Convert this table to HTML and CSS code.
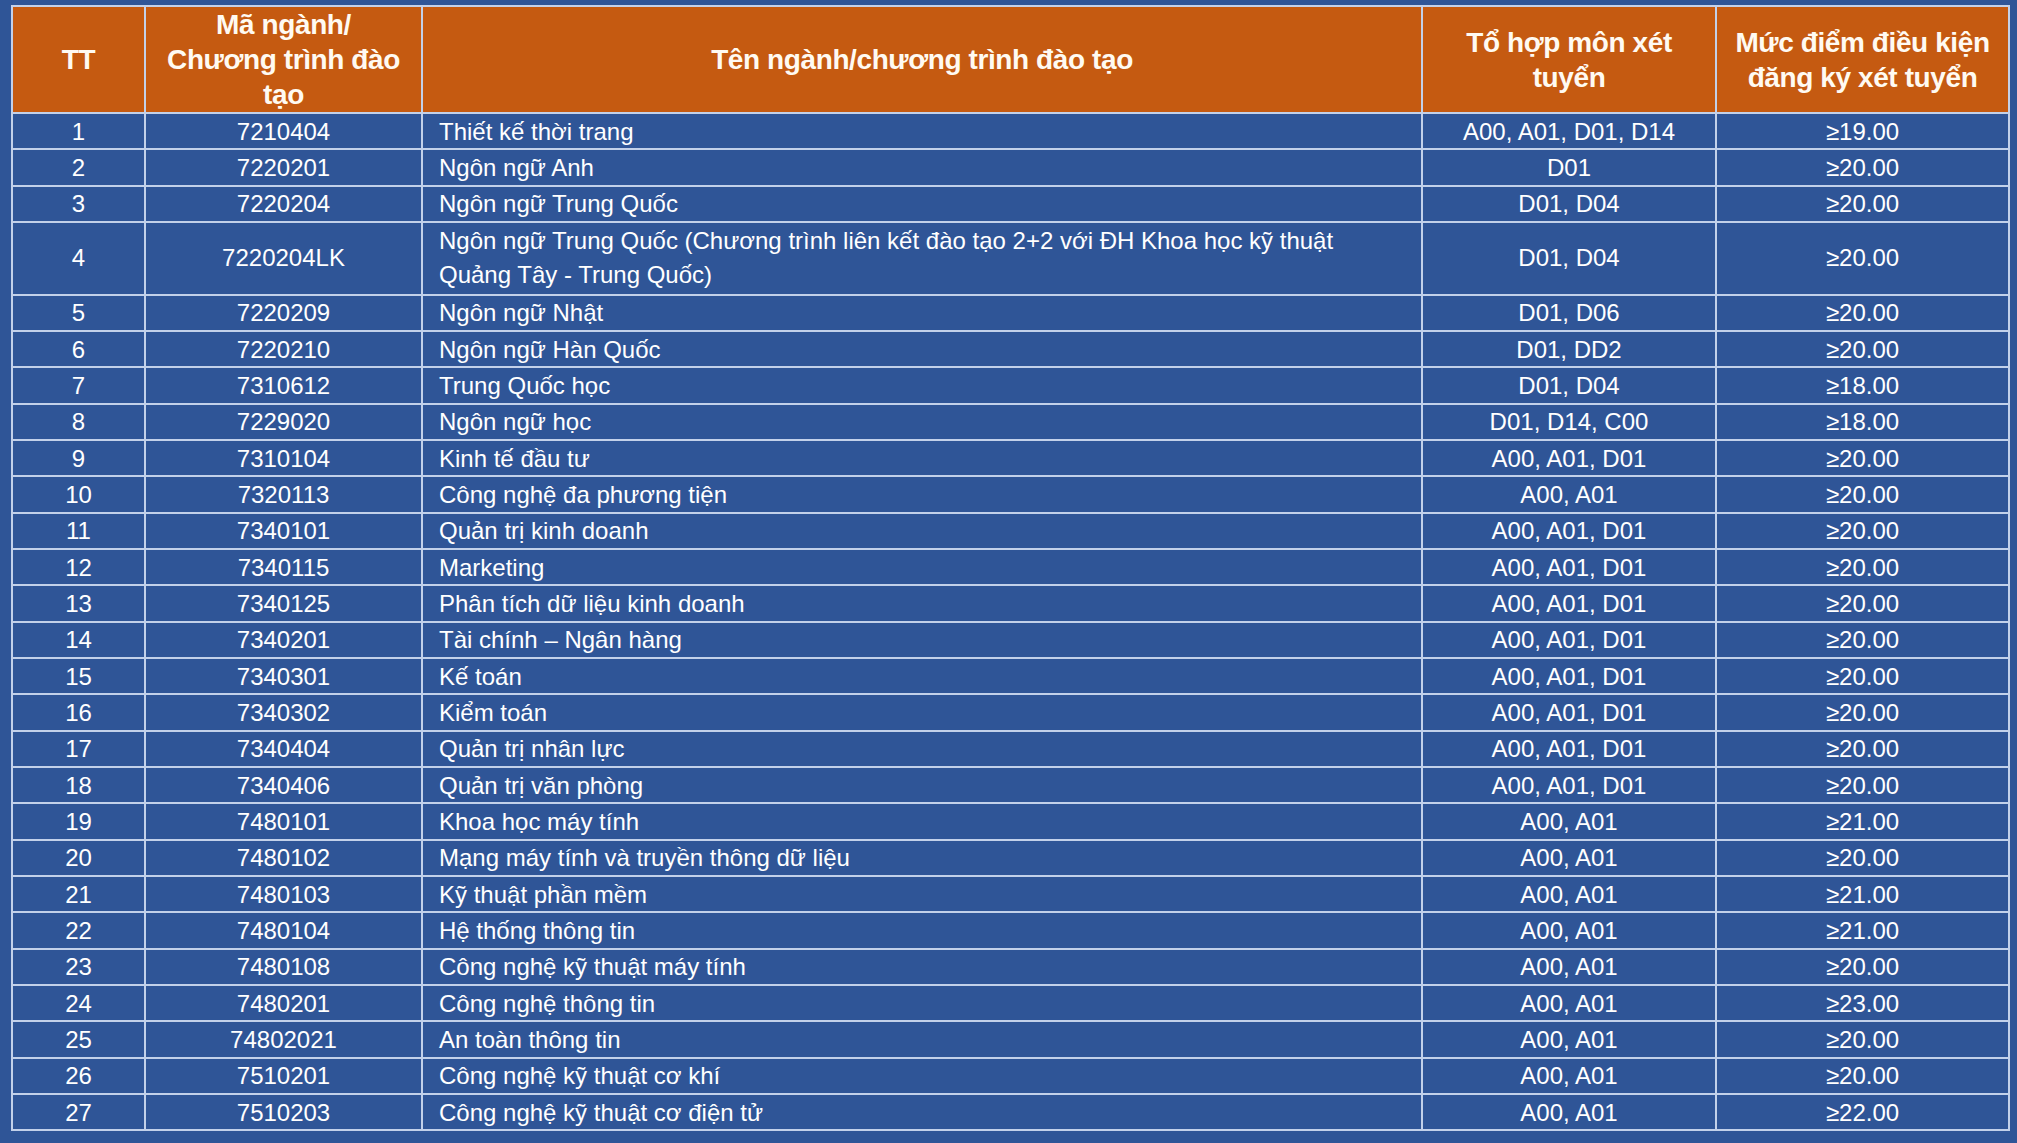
FILE: index.html
```html
<!DOCTYPE html>
<html lang="vi">
<head>
<meta charset="utf-8">
<title>Mức điểm điều kiện đăng ký xét tuyển</title>
<link rel="stylesheet" href="styles.css">
</head>
<body>
<table class="admissions">
  <colgroup>
    <col class="c-tt"><col class="c-code"><col class="c-name"><col class="c-combo"><col class="c-score">
  </colgroup>
  <thead>
    <tr>
      <th>TT</th>
      <th>Mã ngành/<br>Chương trình đào tạo</th>
      <th>Tên ngành/chương trình đào tạo</th>
      <th>Tổ hợp môn xét tuyển</th>
      <th>Mức điểm điều kiện đăng ký xét tuyển</th>
    </tr>
  </thead>
  <tbody>
    <tr><td>1</td><td>7210404</td><td class="name">Thiết kế thời trang</td><td>A00, A01, D01, D14</td><td>≥19.00</td></tr>
    <tr><td>2</td><td>7220201</td><td class="name">Ngôn ngữ Anh</td><td>D01</td><td>≥20.00</td></tr>
    <tr><td>3</td><td>7220204</td><td class="name">Ngôn ngữ Trung Quốc</td><td>D01, D04</td><td>≥20.00</td></tr>
    <tr class="tall"><td>4</td><td>7220204LK</td><td class="name">Ngôn ngữ Trung Quốc (Chương trình liên kết đào tạo 2+2 với ĐH Khoa học kỹ thuật<br>Quảng Tây - Trung Quốc)</td><td>D01, D04</td><td>≥20.00</td></tr>
    <tr><td>5</td><td>7220209</td><td class="name">Ngôn ngữ Nhật</td><td>D01, D06</td><td>≥20.00</td></tr>
    <tr><td>6</td><td>7220210</td><td class="name">Ngôn ngữ Hàn Quốc</td><td>D01, DD2</td><td>≥20.00</td></tr>
    <tr><td>7</td><td>7310612</td><td class="name">Trung Quốc học</td><td>D01, D04</td><td>≥18.00</td></tr>
    <tr><td>8</td><td>7229020</td><td class="name">Ngôn ngữ học</td><td>D01, D14, C00</td><td>≥18.00</td></tr>
    <tr><td>9</td><td>7310104</td><td class="name">Kinh tế đầu tư</td><td>A00, A01, D01</td><td>≥20.00</td></tr>
    <tr><td>10</td><td>7320113</td><td class="name">Công nghệ đa phương tiện</td><td>A00, A01</td><td>≥20.00</td></tr>
    <tr><td>11</td><td>7340101</td><td class="name">Quản trị kinh doanh</td><td>A00, A01, D01</td><td>≥20.00</td></tr>
    <tr><td>12</td><td>7340115</td><td class="name">Marketing</td><td>A00, A01, D01</td><td>≥20.00</td></tr>
    <tr><td>13</td><td>7340125</td><td class="name">Phân tích dữ liệu kinh doanh</td><td>A00, A01, D01</td><td>≥20.00</td></tr>
    <tr><td>14</td><td>7340201</td><td class="name">Tài chính – Ngân hàng</td><td>A00, A01, D01</td><td>≥20.00</td></tr>
    <tr><td>15</td><td>7340301</td><td class="name">Kế toán</td><td>A00, A01, D01</td><td>≥20.00</td></tr>
    <tr><td>16</td><td>7340302</td><td class="name">Kiểm toán</td><td>A00, A01, D01</td><td>≥20.00</td></tr>
    <tr><td>17</td><td>7340404</td><td class="name">Quản trị nhân lực</td><td>A00, A01, D01</td><td>≥20.00</td></tr>
    <tr><td>18</td><td>7340406</td><td class="name">Quản trị văn phòng</td><td>A00, A01, D01</td><td>≥20.00</td></tr>
    <tr><td>19</td><td>7480101</td><td class="name">Khoa học máy tính</td><td>A00, A01</td><td>≥21.00</td></tr>
    <tr><td>20</td><td>7480102</td><td class="name">Mạng máy tính và truyền thông dữ liệu</td><td>A00, A01</td><td>≥20.00</td></tr>
    <tr><td>21</td><td>7480103</td><td class="name">Kỹ thuật phần mềm</td><td>A00, A01</td><td>≥21.00</td></tr>
    <tr><td>22</td><td>7480104</td><td class="name">Hệ thống thông tin</td><td>A00, A01</td><td>≥21.00</td></tr>
    <tr><td>23</td><td>7480108</td><td class="name">Công nghệ kỹ thuật máy tính</td><td>A00, A01</td><td>≥20.00</td></tr>
    <tr><td>24</td><td>7480201</td><td class="name">Công nghệ thông tin</td><td>A00, A01</td><td>≥23.00</td></tr>
    <tr><td>25</td><td>74802021</td><td class="name">An toàn thông tin</td><td>A00, A01</td><td>≥20.00</td></tr>
    <tr><td>26</td><td>7510201</td><td class="name">Công nghệ kỹ thuật cơ khí</td><td>A00, A01</td><td>≥20.00</td></tr>
    <tr><td>27</td><td>7510203</td><td class="name">Công nghệ kỹ thuật cơ điện tử</td><td>A00, A01</td><td>≥22.00</td></tr>
  </tbody>
</table>
</body>
</html>
```

FILE: styles.css
```css
html, body {
  margin: 0;
  background: #2f5597;
}

body {
  padding: 5px 0 0 11px;
  font-family: "Liberation Sans", Arial, sans-serif;
  color: #ffffff;
}

.admissions {
  border-collapse: collapse;
  table-layout: fixed;
  width: 1997px;
}

.c-tt { width: 133px; }
.c-code { width: 277px; }
.c-name { width: 1000px; }
.c-combo { width: 294px; }
.c-score { width: 293px; }

.admissions th,
.admissions td {
  border: 2px solid #c3d1ea;
}

.admissions thead tr {
  height: 106px;
}

.admissions th {
  background: #c55a11;
  color: #fffaf2;
  font-weight: bold;
  font-size: 28px;
  line-height: 35px;
  letter-spacing: -0.4px;
  padding: 0 8px;
  text-align: center;
  vertical-align: middle;
}

.admissions tbody tr {
  height: 36.33px;
}

.admissions tbody tr.tall {
  height: 72.66px;
}

.admissions td {
  background: #2f5597;
  font-size: 24px;
  line-height: 31px;
  padding: 1px 8px 1px;
  text-align: center;
  vertical-align: middle;
  white-space: nowrap;
}

.admissions td.name {
  text-align: left;
  padding-left: 16px;
}

.admissions tr.tall td {
  line-height: 34px;
}
```
